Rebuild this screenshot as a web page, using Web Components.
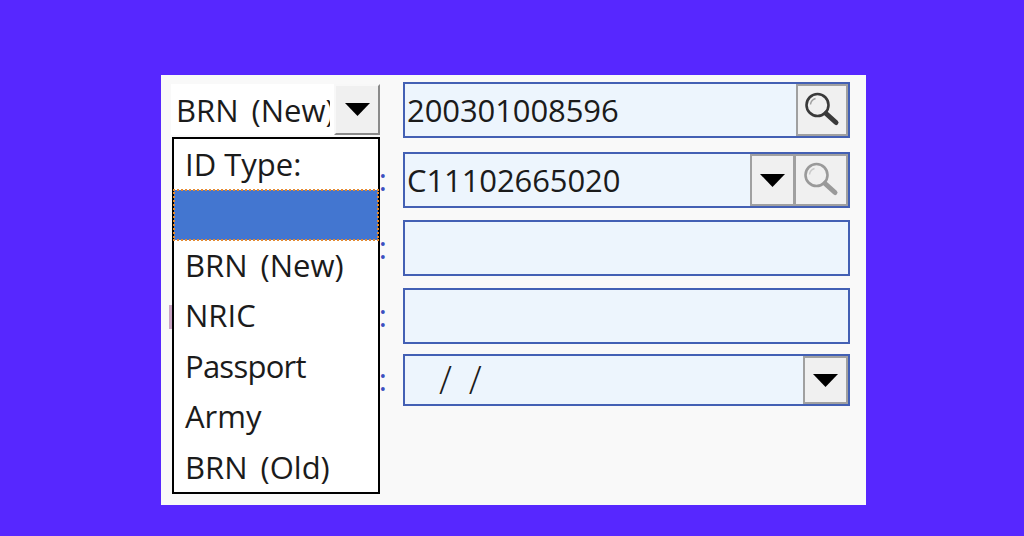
<!DOCTYPE html>
<html lang="en"><head><meta charset="utf-8"><title>ID Search</title>
<style>
html,body{margin:0;height:100%;background:#5727ff}
body{display:block;overflow:hidden;font-family:"Open Sans","Noto Sans",sans-serif;color:#1b1b1b}
</style></head><body>
<id-panel>
  <form-row slot="rows" style="--top:0px;--h:56px">
    <id-select slot="lead"></id-select>
    <text-field value="200301008596"><icon-button kind="search" w="52"></icon-button></text-field>
  </form-row>
  <form-row slot="rows" colon style="--top:14px;--h:56px">
    <text-field value="C11102665020"><icon-button kind="arrow" w="45"></icon-button><icon-button kind="search" w="54" muted></icon-button></text-field>
  </form-row>
  <form-row slot="rows" colon style="--top:12px;--h:56px"><text-field></text-field></form-row>
  <form-row slot="rows" colon style="--top:12px;--h:56px"><text-field></text-field></form-row>
  <form-row slot="rows" colon style="--top:10px;--h:52px">
    <text-field date><icon-button kind="arrow" w="45"></icon-button></text-field>
  </form-row>
  <id-menu slot="overlay" selected="1"></id-menu>
</id-panel>
<script>
const ARROW='<svg width="25" height="13" viewBox="0 0 25 13" aria-hidden="true"><path d="M0 0H25L12.5 13Z" fill="#000"/></svg>';
const LENS=c=>`<svg width="36" height="36" viewBox="0 0 36 36" aria-hidden="true"><circle cx="13.5" cy="13" r="11" fill="none" stroke="${c}" stroke-width="2.6"/><path d="M6.5 12.5A7 7 0 0 1 11.5 6.5" fill="none" stroke="${c}" stroke-opacity=".45" stroke-width="1.4"/><path d="M22 21.5L32 30.5" stroke="${c}" stroke-width="5" stroke-linecap="round"/></svg>`;
class Base extends HTMLElement{
  render(html){if(!this.shadowRoot)this.attachShadow({mode:'open'});this.shadowRoot.innerHTML=html;}
}
customElements.define('id-panel',class extends Base{connectedCallback(){this.render(`<style>
:host{display:block;position:absolute;left:161px;top:75px;width:705px;height:430px;background:#f9f9f9}
.rows{display:flex;flex-direction:column;padding:7px 16px 0 10px}
.peek{position:absolute;left:8px;top:230px;width:3px;height:24px;background:#c9a6c4}
</style><div class="rows"><slot name="rows"></slot></div><div class="peek"></div><slot name="overlay"></slot>`);}});
customElements.define('form-row',class extends Base{connectedCallback(){
const colon=this.hasAttribute('colon');
this.render(`<style>
:host{display:grid;grid-template-columns:232px 1fr;height:var(--h);margin-top:var(--top)}
.lead{display:flex;align-items:${colon?'center':'flex-start'};justify-content:${colon?'flex-end':'flex-start'};padding-right:${colon?16:0}px;font-size:31px;color:#3a4fc0;padding-bottom:${colon?2:0}px}
</style><div class="lead"><slot name="lead">${colon?':':''}</slot></div><slot></slot>`);}});
customElements.define('text-field',class extends Base{connectedCallback(){
const s='font-size:38px;line-height:31px;vertical-align:-2px;font-weight:300';
const val=this.hasAttribute('date')?`<span style="margin-left:32px;${s}">/</span><span style="margin-left:17px;${s}">/</span>`:(this.getAttribute('value')||'');
this.render(`<style>
:host{display:flex;box-sizing:border-box;border:2px solid #4360b4;background:#edf5fd;height:100%}
.v{flex:1;min-width:0;font-size:31px;line-height:1;align-self:center;padding-left:2px;white-space:nowrap;color:#1b1b1b;letter-spacing:-.1px}
</style><div class="v">${val}</div><slot></slot>`);}});
customElements.define('icon-button',class extends Base{connectedCallback(){
const k=this.getAttribute('kind'),w=this.getAttribute('w');
this.render(`<style>
:host{display:flex;align-items:center;justify-content:center;box-sizing:border-box;width:${w}px;background:#f0f0f0;border:2px solid #a0a0a0;margin-left:-1px}
</style>${k==='arrow'?ARROW:LENS(this.hasAttribute('muted')?'#9a9a9a':'#3a3a3a')}`);}});
customElements.define('id-select',class extends Base{connectedCallback(){this.render(`<style>
:host{display:flex;height:51px;width:209px;margin-top:2px;background:#fff}
.v{flex:1;min-width:0;overflow:hidden;padding:0 0 0 5px;font-size:31px;line-height:52px;white-space:nowrap;margin-right:4px;color:#1b1b1b;word-spacing:5px}
.b{width:46px;box-sizing:border-box;display:flex;align-items:center;justify-content:center;background:#f0f0f0;border:2px solid;border-color:#f8f8f8 #8a8a8a #8a8a8a #f8f8f8}
</style><div class="v">BRN (New)</div><div class="b">${ARROW}</div>`);}});
customElements.define('id-menu',class extends Base{connectedCallback(){
const items=['ID Type:','','BRN (New)','NRIC','Passport','Army','BRN (Old)'],sel=+this.getAttribute('selected');
this.render(`<style>
:host{display:block;position:absolute;left:11px;top:62px;width:208px;height:357px;box-sizing:border-box;border:2px solid #000;background:#fff}
.i{box-sizing:border-box;height:50.6px;line-height:50.4px;padding-left:11px;font-size:31px;white-space:nowrap}
.i:first-child{height:50px;line-height:49px}
.s{height:50px;background:#4376d0;outline:2px dotted #e68a2e;outline-offset:-1px}
.tight{letter-spacing:-.75px}
.wide{word-spacing:5px}
</style>${items.map((t,i)=>`<div class="i${i===sel?' s':''}${t==='Passport'?' tight':''}${t.startsWith('BRN')?' wide':''}">${t}</div>`).join('')}`);}});
</script>
</body></html>
